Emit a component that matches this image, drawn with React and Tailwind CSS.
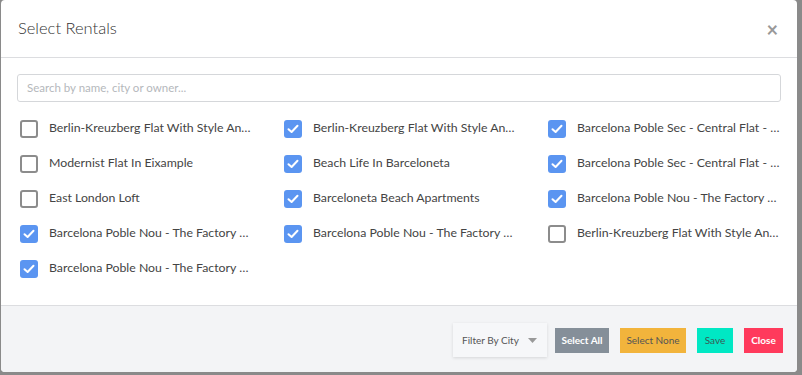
const rentals = [
  ['Berlin-Kreuzberg Flat With Style And Charm', false],
  ['Berlin-Kreuzberg Flat With Style And Charm', true],
  ['Barcelona Poble Sec - Central Flat - Montjuic', true],
  ['Modernist Flat In Eixample', false],
  ['Beach Life In Barceloneta', true],
  ['Barcelona Poble Sec - Central Flat - Paral-lel', true],
  ['East London Loft', false],
  ['Barceloneta Beach Apartments', true],
  ['Barcelona Poble Nou - The Factory Loft', true],
  ['Barcelona Poble Nou - The Factory Loft', true],
  ['Barcelona Poble Nou - The Factory Loft', true],
  ['Berlin-Kreuzberg Flat With Style And Charm', false],
  ['Barcelona Poble Nou - The Factory Loft', true],
]

function Checkbox({ checked }) {
  if (checked) {
    return (
      <span className="w-[18px] h-[18px] rounded-[3px] bg-[#5b95f1] flex items-center justify-center shrink-0">
        <svg width="12" height="10" viewBox="0 0 12 10" fill="none">
          <path d="M1.5 5.2 L4.6 8 L10.5 1.8" stroke="white" strokeWidth="2" strokeLinecap="round" strokeLinejoin="round" />
        </svg>
      </span>
    )
  }
  return <span className="w-[18px] h-[18px] rounded-[3px] border-2 border-[#8c8c8c] bg-white shrink-0" />
}

export default function App() {
  return (
    <div className="w-[802px] h-[375px] bg-[#8a8a8a] pl-px pr-[5px] pb-[3px] font-['Lato','Liberation_Sans',sans-serif]">
      <div className="h-full bg-white rounded-[4px] flex flex-col overflow-hidden">
        <div className="h-[58px] border-b border-[#dcdde0] flex items-center justify-between pl-[17px] pr-[19px] shrink-0">
          <h2 className="text-[16.5px] font-light text-[#333]">Select Rentals</h2>
          <span className="text-[#999] text-[20px] font-bold leading-none">×</span>
        </div>

        <div className="flex-1 pt-4">
          <div className="mx-4 h-[28px] border border-[#d5d7da] rounded-[3px] flex items-center px-[9px]">
            <span className="text-[11.5px] text-[#b5b8bc]">Search by name, city or owner...</span>
          </div>
          <div className="mt-[9px] pl-[19px] grid grid-cols-[repeat(3,264px)]">
            {rentals.map(([name, checked], i) => (
              <div key={i} className="h-[35px] flex items-center gap-[11px]">
                <Checkbox checked={checked} />
                <span className="text-[12.3px] text-[#444] truncate max-w-[203px]">{name}</span>
              </div>
            ))}
          </div>
        </div>

        <div className="h-[67px] border-t border-[#dcdde0] bg-[#f3f4f6] flex items-center justify-end pr-[14px] shrink-0">
          <div className="w-[94px] h-[34px] bg-[#f6f7f9] shadow-[0_1px_3px_rgba(0,0,0,0.12)] flex items-center pl-[9px] gap-[9px] mt-[2px]">
            <span className="text-[10px] text-[#555]">Filter By City</span>
            <svg width="9" height="5" viewBox="0 0 9 5"><path d="M0 0 H9 L4.5 5 Z" fill="#999" /></svg>
          </div>
          <button className="ml-2 w-[54px] h-[25px] bg-[#858f99] text-white text-[10px] font-bold mt-[2px]">Select All</button>
          <button className="ml-[11px] w-[66px] h-[25px] bg-[#f2b43c] text-[#555] text-[10px] mt-[2px]">Select None</button>
          <button className="ml-[11px] w-[36px] h-[25px] bg-[#00e8c4] text-[#3a5a55] text-[10px] mt-[2px]">Save</button>
          <button className="ml-[11px] w-[39px] h-[25px] bg-[#ff3a5c] text-white text-[10px] font-bold mt-[2px]">Close</button>
        </div>
      </div>
    </div>
  )
}
